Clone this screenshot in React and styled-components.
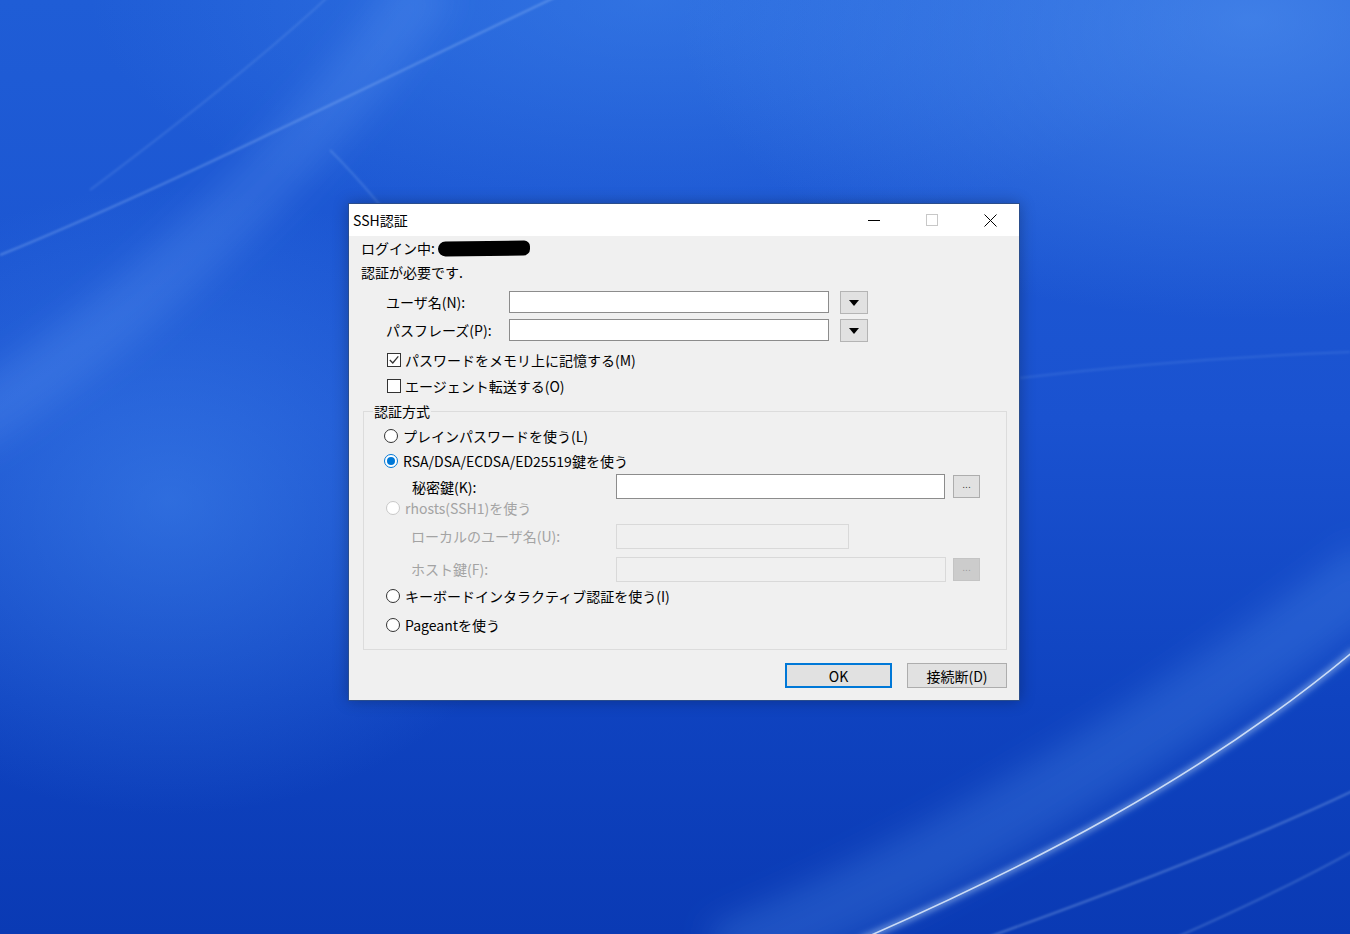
import styled, { createGlobalStyle } from 'styled-components';

const GlobalStyle = createGlobalStyle`
  html, body {
    margin: 0;
    padding: 0;
  }
  body {
    font-family: "Noto Sans CJK JP", "Noto Sans", sans-serif;
    overflow: hidden;
  }
`;

const UI_FONT = `"Noto Sans CJK JP", "Noto Sans", sans-serif`;

const Desktop = styled.div`
  position: relative;
  width: 1350px;
  height: 934px;
  overflow: hidden;
  box-sizing: border-box;
  padding: 203px 0 0 348px;
  background-color: #1447c6;
  background-image:
    radial-gradient(ellipse 520px 420px at 170px 500px, rgba(70, 140, 240, 0.5), transparent 75%),
    radial-gradient(ellipse 760px 400px at 1250px 20px, rgba(90, 155, 245, 0.55), transparent 75%),
    radial-gradient(ellipse 700px 300px at 650px 0px, rgba(70, 140, 240, 0.45), transparent 80%),
    linear-gradient(180deg, #1f5dd6 0%, #1a52d0 45%, #0f43c0 75%, #0a3ab4 100%);
`;

const Wallpaper = styled.svg`
  position: absolute;
  left: 0;
  top: 0;
`;

const Dialog = styled.div`
  position: relative;
  width: 672px;
  box-sizing: border-box;
  border: 1px solid #2a4d8c;
  background: #f0f0f0;
  box-shadow: 0 0 14px rgba(0, 0, 0, 0.28);
  font-family: ${UI_FONT};
  font-size: 14px;
  color: #000;
`;

const TitleBar = styled.div`
  display: flex;
  align-items: center;
  height: 32px;
  background: #fff;
`;

const Title = styled.div`
  flex: 1;
  padding-left: 4px;
  font-size: 14px;
  line-height: 30px;
`;

const CaptionButton = styled.div`
  width: 58px;
  height: 32px;
  display: flex;
  align-items: center;
  justify-content: center;
`;

const Content = styled.div`
  padding: 0 12px 12px;
`;

const InfoLine = styled.div`
  display: flex;
  align-items: center;
  height: 24px;
  gap: 3px;
`;

const Redacted = styled.span`
  display: inline-block;
  width: 92px;
  height: 15px;
  background: #000;
  border-radius: 9px 7px 8px 9px;
  transform: rotate(-0.6deg);
`;

const FieldRow = styled.div`
  display: flex;
  align-items: center;
  height: ${(p) => p.$h || 28}px;
  margin-top: ${(p) => p.$mt || 0}px;
  padding-left: ${(p) => p.$indent || 0}px;
`;

const FieldLabel = styled.span`
  width: ${(p) => p.$w}px;
  flex-shrink: 0;
  color: ${(p) => (p.$disabled ? '#a3a3a3' : '#000')};
  white-space: nowrap;
`;

const TextBox = styled.input`
  width: ${(p) => p.$w}px;
  height: ${(p) => p.$h || 22}px;
  box-sizing: border-box;
  margin: 0;
  padding: 0 4px;
  border: 1px solid ${(p) => (p.disabled ? '#d9d9d9' : '#8c8c8c')};
  background: ${(p) => (p.disabled ? '#f0f0f0' : '#fff')};
  font-family: ${UI_FONT};
  font-size: 14px;
  outline: none;
`;

const DropButton = styled.div`
  width: 28px;
  height: 23px;
  margin-left: 11px;
  box-sizing: border-box;
  border: 1px solid #b4b4b4;
  background: #e1e1e1;
  display: flex;
  align-items: center;
  justify-content: center;

  &::after {
    content: '';
    border-left: 5px solid transparent;
    border-right: 5px solid transparent;
    border-top: 6px solid #000;
    margin-top: 1px;
  }
`;

const BrowseButton = styled.div`
  width: 27px;
  height: 23px;
  margin-left: ${(p) => p.$gap || 8}px;
  box-sizing: border-box;
  border: 1px solid ${(p) => (p.$disabled ? '#c4c4c4' : '#adadad')};
  background: ${(p) => (p.$disabled ? '#cccccc' : '#e1e1e1')};
  color: ${(p) => (p.$disabled ? '#9a9a9a' : '#333')};
  font-size: 9px;
  line-height: 19px;
  text-align: center;
  font-family: "DejaVu Sans", sans-serif;
`;

const CheckRow = styled.label`
  display: flex;
  align-items: center;
  height: 26px;
  margin-top: ${(p) => p.$mt || 0}px;
  padding-left: 26px;
  gap: 4px;
`;

const CheckBox = styled.span`
  width: 14px;
  height: 14px;
  box-sizing: border-box;
  border: 1px solid #333;
  background: #fff;
  display: flex;
  align-items: center;
  justify-content: center;
`;

const Group = styled.fieldset`
  margin: 2px 0 0 2px;
  padding: 3px 0 12px 20px;
  border: 1px solid #dcdcdc;
  min-width: 0;
`;

const Legend = styled.legend`
  margin-left: -11px;
  padding: 0 1px;
  line-height: 20px;
  font-size: 14px;
`;

const OptionRow = styled.label`
  display: flex;
  align-items: center;
  gap: 5px;
  height: ${(p) => p.$h || 24}px;
  margin-top: ${(p) => p.$mt || 0}px;
  padding-left: ${(p) => p.$offset || 0}px;
  color: ${(p) => (p.$disabled ? '#a3a3a3' : '#000')};
  white-space: nowrap;
`;

const Radio = styled.span`
  width: 14px;
  height: 14px;
  box-sizing: border-box;
  border-radius: 50%;
  border: 1px solid
    ${(p) => (p.$checked ? '#0078d7' : p.$disabled ? '#c8c8c8' : '#333')};
  background: #fff;
  display: flex;
  align-items: center;
  justify-content: center;

  &::after {
    content: '';
    width: 8px;
    height: 8px;
    border-radius: 50%;
    background: ${(p) => (p.$checked ? '#0078d7' : 'transparent')};
  }
`;

const ButtonBar = styled.div`
  display: flex;
  justify-content: flex-end;
  gap: 15px;
  margin-top: 13px;
`;

const PushButton = styled.button`
  width: ${(p) => p.$w}px;
  height: 25px;
  box-sizing: border-box;
  margin: 0;
  padding: 0;
  border: ${(p) => (p.$default ? '2px solid #0078d7' : '1px solid #adadad')};
  background: #e1e1e1;
  font-family: ${UI_FONT};
  font-size: 14px;
  line-height: 20px;
  color: #000;
`;

const CheckMark = () => (
  <svg width="12" height="12" viewBox="0 0 12 12">
    <path d="M1.8 6 L4.8 9 L10.3 2.4" stroke="#333" strokeWidth="1.3" fill="none" />
  </svg>
);

const Background = () => (
  <Wallpaper width="1350" height="934" viewBox="0 0 1350 934">
    <defs>
      <filter id="soft" x="-20%" y="-20%" width="140%" height="140%">
        <feGaussianBlur stdDeviation="16" />
      </filter>
      <filter id="glow" x="-20%" y="-20%" width="140%" height="140%">
        <feGaussianBlur stdDeviation="3" />
      </filter>
      <filter id="haze" x="-20%" y="-20%" width="140%" height="140%">
        <feGaussianBlur stdDeviation="1.2" />
      </filter>
    </defs>
    {/* soft light bands */}
    <path d="M-40 430 C 120 330 300 170 430 -20" stroke="rgba(120,180,255,0.18)" strokeWidth="60" fill="none" filter="url(#soft)" />
    <path d="M720 960 C 960 860 1180 720 1380 570" stroke="rgba(110,180,255,0.2)" strokeWidth="70" fill="none" filter="url(#soft)" />
    {/* top-left streaks */}
    <path d="M0 255 C 160 190 360 90 560 -5" stroke="rgba(190,220,255,0.3)" strokeWidth="2" fill="none" filter="url(#haze)" />
    <path d="M90 190 C 170 130 260 60 330 -5" stroke="rgba(190,220,255,0.14)" strokeWidth="2" fill="none" filter="url(#haze)" />
    <path d="M330 150 C 370 190 410 240 450 300" stroke="rgba(190,220,255,0.18)" strokeWidth="2" fill="none" filter="url(#haze)" />
    {/* right side faint streak */}
    <path d="M1020 378 C 1120 366 1240 356 1350 352" stroke="rgba(190,220,255,0.12)" strokeWidth="2" fill="none" filter="url(#haze)" />
    {/* bottom-right bright arcs */}
    <path d="M860 940 C 1020 870 1200 780 1355 650" stroke="rgba(200,230,255,0.5)" strokeWidth="6" fill="none" filter="url(#glow)" />
    <path d="M860 940 C 1020 870 1200 780 1355 650" stroke="rgba(235,245,255,0.8)" strokeWidth="1.6" fill="none" />
    <path d="M980 940 C 1120 890 1250 840 1355 790" stroke="rgba(200,230,255,0.3)" strokeWidth="2" fill="none" filter="url(#haze)" />
    <path d="M1170 940 C 1250 905 1310 875 1355 850" stroke="rgba(200,230,255,0.22)" strokeWidth="2" fill="none" filter="url(#haze)" />
  </Wallpaper>
);

const App = () => {
  return (
    <>
      <GlobalStyle />
      <Desktop>
        <Background />
        <Dialog>
          <TitleBar>
            <Title>SSH認証</Title>
            <CaptionButton>
              <svg width="12" height="12" viewBox="0 0 12 12">
                <path d="M0 6.5 H12" stroke="#000" strokeWidth="1" />
              </svg>
            </CaptionButton>
            <CaptionButton>
              <svg width="12" height="12" viewBox="0 0 12 12">
                <rect x="0.5" y="0.5" width="11" height="11" stroke="#c8c8c8" strokeWidth="1" fill="none" />
              </svg>
            </CaptionButton>
            <CaptionButton>
              <svg width="13" height="13" viewBox="0 0 13 13">
                <path d="M0.5 0.5 L12.5 12.5 M12.5 0.5 L0.5 12.5" stroke="#000" strokeWidth="1" />
              </svg>
            </CaptionButton>
          </TitleBar>

          <Content>
            <InfoLine>
              <span>ログイン中:</span>
              <Redacted />
            </InfoLine>
            <InfoLine>認証が必要です.</InfoLine>

            <FieldRow $mt={4} $indent={25}>
              <FieldLabel $w={123}>ユーザ名(N):</FieldLabel>
              <TextBox $w={320} readOnly />
              <DropButton />
            </FieldRow>
            <FieldRow $indent={25}>
              <FieldLabel $w={123}>パスフレーズ(P):</FieldLabel>
              <TextBox $w={320} type="password" readOnly />
              <DropButton />
            </FieldRow>

            <CheckRow $mt={3}>
              <CheckBox>
                <CheckMark />
              </CheckBox>
              パスワードをメモリ上に記憶する(M)
            </CheckRow>
            <CheckRow>
              <CheckBox />
              エージェント転送する(O)
            </CheckRow>

            <Group>
              <Legend>認証方式</Legend>
              <OptionRow>
                <Radio />
                プレインパスワードを使う(L)
              </OptionRow>
              <OptionRow $h={26}>
                <Radio $checked />
                RSA/DSA/ECDSA/ED25519鍵を使う
              </OptionRow>
              <FieldRow $h={25} $indent={28}>
                <FieldLabel $w={204}>秘密鍵(K):</FieldLabel>
                <TextBox $w={329} $h={25} readOnly />
                <BrowseButton>...</BrowseButton>
              </FieldRow>
              <OptionRow $h={18} $offset={2} $disabled>
                <Radio $disabled />
                rhosts(SSH1)を使う
              </OptionRow>
              <FieldRow $h={26} $mt={6} $indent={27}>
                <FieldLabel $w={205} $disabled>
                  ローカルのユーザ名(U):
                </FieldLabel>
                <TextBox $w={233} $h={25} disabled />
              </FieldRow>
              <FieldRow $h={26} $mt={7} $indent={27}>
                <FieldLabel $w={205} $disabled>
                  ホスト鍵(F):
                </FieldLabel>
                <TextBox $w={330} $h={25} disabled />
                <BrowseButton $disabled $gap={7}>...</BrowseButton>
              </FieldRow>
              <OptionRow $mt={2} $offset={2}>
                <Radio />
                キーボードインタラクティブ認証を使う(I)
              </OptionRow>
              <OptionRow $mt={5} $offset={2}>
                <Radio />
                Pageantを使う
              </OptionRow>
            </Group>

            <ButtonBar>
              <PushButton $w={107} $default>
                OK
              </PushButton>
              <PushButton $w={100}>接続断(D)</PushButton>
            </ButtonBar>
          </Content>
        </Dialog>
      </Desktop>
    </>
  );
};

export default App;
